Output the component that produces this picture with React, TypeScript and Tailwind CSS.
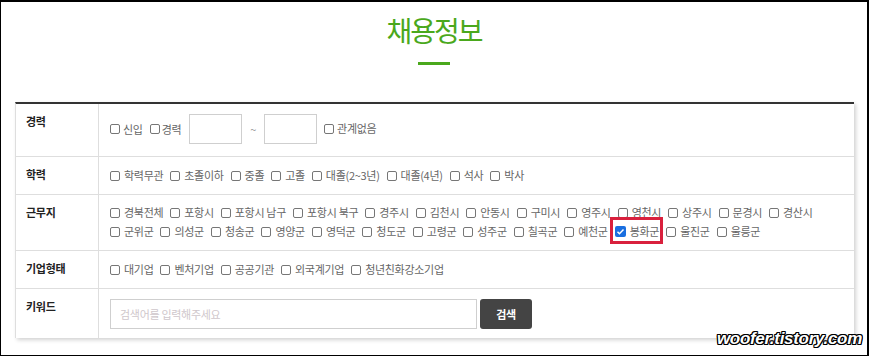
import React from "react";

const font = { fontFamily: '"Noto Sans CJK KR", "Noto Sans", sans-serif' };

const eduItems = ["학력무관", "초졸이하", "중졸", "고졸", "대졸(2~3년)", "대졸(4년)", "석사", "박사"];
const areaLine1 = ["경북전체", "포항시", "포항시 남구", "포항시 북구", "경주시", "김천시", "안동시", "구미시", "영주시", "영천시", "상주시", "문경시", "경산시"];
const areaLine2 = ["군위군", "의성군", "청송군", "영양군", "영덕군", "청도군", "고령군", "성주군", "칠곡군", "예천군", "봉화군", "울진군", "울릉군"];
const companyItems = ["대기업", "벤처기업", "공공기관", "외국계기업", "청년친화강소기업"];

const Box = ({ checked = false }: { checked?: boolean }) =>
  checked ? (
    <span className="inline-flex w-[11px] h-[11px] shrink-0 items-center justify-center rounded-[2px] bg-[#1a6fe0]">
      <svg viewBox="0 0 12 12" className="w-[9px] h-[9px]">
        <path d="M2 6.3l2.6 2.6L10 3.3" fill="none" stroke="#fff" strokeWidth="2" />
      </svg>
    </span>
  ) : (
    <span className="inline-block w-[10px] h-[10px] shrink-0 rounded-[2px] border border-[#767676] bg-white" />
  );

const Check = ({ label, checked = false, mark = false, gap = "gap-[4px]" }: { label: string; checked?: boolean; mark?: boolean; gap?: string }) => (
  <label className={`relative inline-flex items-center ${gap} mr-[7px] whitespace-pre`}>
    <Box checked={checked} />
    <span>{label}</span>
    {mark && <span className="absolute -left-[5px] -right-[4px] -top-[5px] -bottom-[3px] border-[3px] border-[#d9203d]" />}
  </label>
);

const Row = ({ label, children, last = false, cell = "py-[9px]" }: { label: string; children: React.ReactNode; last?: boolean; cell?: string }) => (
  <div className={`flex ${last ? "" : "border-b border-[#dedede]"}`}>
    <div className="w-[83px] shrink-0 border-r border-[#dedede] pl-[10px] pt-[8px] leading-[19px] font-bold text-[#222]">{label}</div>
    <div className={`flex-1 pl-[11px] ${cell} leading-[19px] text-[#666]`}>{children}</div>
  </div>
);

export default function App() {
  return (
    <div
      className="relative w-[869px] h-[356px] overflow-hidden bg-white border-l border-b border-t-2 border-r-2 border-black text-[11px] tracking-[-0.3px]"
      style={font}
    >
      <div className="flex flex-col items-center pt-[11px]">
        <h1 className="text-[28px] leading-[34px] tracking-[-2px] text-[#4aa81c] font-normal">채용정보</h1>
        <div className="mt-[15px] w-[32px] h-[3px] bg-[#4aa81c]" />
      </div>

      <div className="ml-[14px] mt-[37px] w-[839px] border-t-2 border-t-[#333] border-l border-[#dedede] bg-white shadow-[2px_2px_4px_rgba(0,0,0,0.18)]">
        <Row label="경력" cell="pt-[10px] pb-[12px]">
          <div className="flex items-center">
            <Check label="신입" gap="gap-[3px]" />
            <Check label="경력" gap="gap-[2px]" />
            <input className="ml-[1px] w-[53px] h-[30px] border border-[#cfcfcf] outline-none" />
            <span className="mx-[8px] text-[#999]">~</span>
            <input className="w-[53px] h-[30px] border border-[#cfcfcf] outline-none" />
            <span className="ml-[7px]">
              <Check label="관계없음" gap="gap-[3px]" />
            </span>
          </div>
        </Row>
        <Row label="학력">
          <div className="flex">
            {eduItems.map((t) => (
              <Check key={t} label={t} />
            ))}
          </div>
        </Row>
        <Row label="근무지" cell="pt-[8px] pb-[9px]">
          <div className="flex">
            {areaLine1.map((t) => (
              <Check key={t} label={t} />
            ))}
          </div>
          <div className="flex">
            {areaLine2.map((t) => (
              <Check key={t} label={t} checked={t === "봉화군"} mark={t === "봉화군"} />
            ))}
          </div>
        </Row>
        <Row label="기업형태">
          <div className="flex">
            {companyItems.map((t) => (
              <Check key={t} label={t} />
            ))}
          </div>
        </Row>
        <Row label="키워드" last cell="pt-[10px] pb-[9px]">
          <div className="flex items-center gap-[3px]">
            <input
              placeholder="검색어를 입력해주세요"
              className="w-[367px] h-[30px] border border-[#cfcfcf] pl-[9px] outline-none placeholder:text-[#cfc7cb]"
              style={font}
            />
            <button className="w-[52px] h-[30px] rounded-[3px] bg-[#444] text-white font-bold">검색</button>
          </div>
        </Row>
      </div>

      <div
        className="absolute right-[5px] bottom-[4px] text-[17px] font-bold italic tracking-[-0.3px] text-white [text-shadow:1px_0_0_#000,-1px_0_0_#000,0_1px_0_#000,0_-1px_0_#000,1px_1px_0_#000,-1px_-1px_0_#000,1px_-1px_0_#000,-1px_1px_0_#000]"
        style={{ fontFamily: '"Liberation Sans", Arial, sans-serif' }}
      >
        woofer.tistory.com
      </div>
    </div>
  );
}
